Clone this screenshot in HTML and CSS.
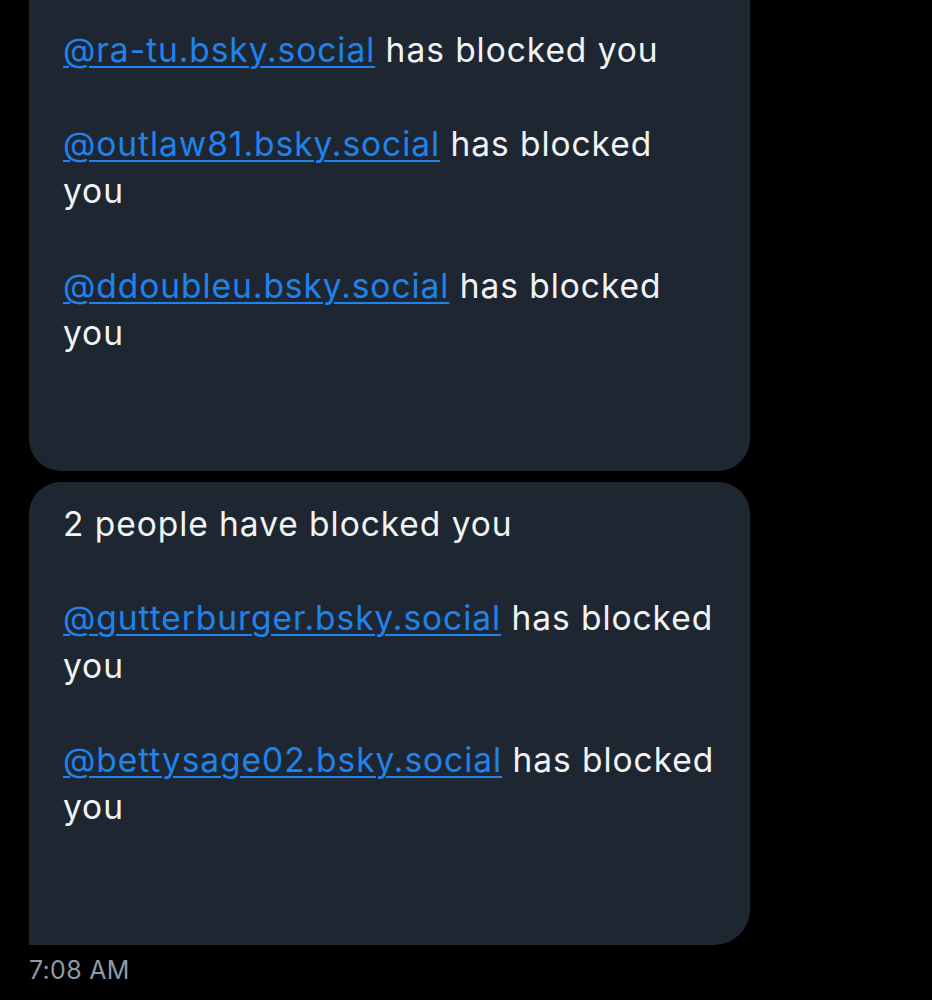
FILE: index.html
```html
<!DOCTYPE html>
<html lang="en">
<head>
<meta charset="utf-8">
<title>Messages</title>
<link rel="stylesheet" href="styles.css">
</head>
<body>
<main class="thread">
  <div class="bubble bubble-first">
    <p class="line gap">3 people have blocked you</p>
    <p class="line gap"><a class="handle" href="#">@ra-tu.bsky.social</a> has blocked you</p>
    <p class="line gap"><a class="handle" href="#">@outlaw81.bsky.social</a> has blocked you</p>
    <p class="line"><a class="handle" href="#">@ddoubleu.bsky.social</a> has blocked you</p>
  </div>
  <div class="bubble bubble-last">
    <p class="line gap">2 people have blocked you</p>
    <p class="line gap"><a class="handle" href="#">@gutterburger.bsky.social</a> has blocked you</p>
    <p class="line"><a class="handle" href="#">@bettysage02.bsky.social</a> has blocked you</p>
  </div>
  <div class="time">7:08 AM</div>
</main>
</body>
</html>
```
FILE: styles.css
```css
html, body {
  margin: 0;
  padding: 0;
  background: #000;
}
body {
  font-family: Inter, "Noto Sans", sans-serif;
  color: #f1f3f5;
  overflow: hidden;
  height: 1000px;
}
.thread {
  display: flex;
  flex-direction: column;
  gap: 11px;
  padding-left: 29px;
  width: 721px;
  margin-top: -87px;
}
.bubble {
  background: #1e2731;
  border-radius: 32px;
  padding: 19px 33px 113px 34px;
}
.bubble-last {
  border-bottom-left-radius: 0;
  border-bottom-right-radius: 36px;
}
.line {
  margin: 0;
  font-size: 33.5px;
  line-height: 47.3px;
  letter-spacing: 0.95px;
}
.line.gap {
  margin-bottom: 47.3px;
}
.handle {
  color: #1f83ee;
  text-decoration: underline;
  text-decoration-thickness: 2px;
  text-underline-offset: 4px;
}
.time {
  font-size: 25px;
  letter-spacing: 0.3px;
  color: #8e9aa8;
  margin-top: -1px;
  line-height: 30px;
}
```
